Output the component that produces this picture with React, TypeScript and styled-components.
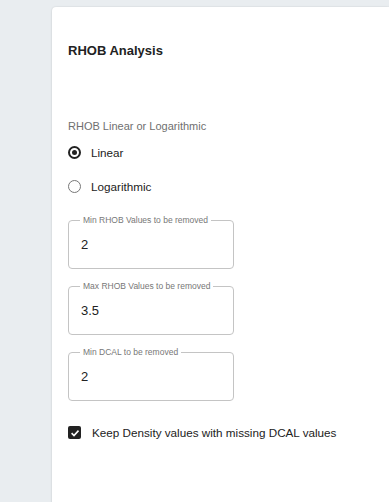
import React, { useState } from 'react'
import styled, { createGlobalStyle } from 'styled-components'

const GlobalStyle = createGlobalStyle`
  html, body {
    margin: 0;
    padding: 0;
    background: #e9edf0;
    font-family: "Liberation Sans", Arial, sans-serif;
  }
`

const Page = styled.div`
  padding: 7px 0 0 52px;
  height: 495px;
  overflow: hidden;
`

const Card = styled.div`
  background: #ffffff;
  border-radius: 4px 0 0 0;
  box-shadow: 0 0 2px rgba(0, 0, 0, 0.12), 0 1px 3px rgba(0, 0, 0, 0.06);
  min-height: 520px;
  padding: 36px 16px 0 16px;
  display: flex;
  flex-direction: column;
`

const Title = styled.h2`
  margin: 0;
  font-size: 13px;
  font-weight: bold;
  color: #222;
  line-height: 15px;
`

const GroupLabel = styled.div`
  margin-top: 61px;
  font-size: 11px;
  color: #6f6f6f;
  line-height: 14px;
`

const Radios = styled.div`
  margin-top: 2px;
  display: flex;
  flex-direction: column;
`

const RadioRow = styled.label`
  display: flex;
  align-items: center;
  gap: 10px;
  height: 34px;
  font-size: 11.7px;
  color: #222;
  cursor: pointer;
`

const RadioCircle = styled.span<{ $checked: boolean }>`
  box-sizing: border-box;
  width: 13px;
  height: 13px;
  border-radius: 50%;
  border: ${p => (p.$checked ? '2px solid #222' : '1px solid #777')};
  display: flex;
  align-items: center;
  justify-content: center;

  &::after {
    content: '';
    width: 5px;
    height: 5px;
    border-radius: 50%;
    background: ${p => (p.$checked ? '#222' : 'transparent')};
  }
`

const Fields = styled.div`
  margin-top: 13px;
  display: flex;
  flex-direction: column;
  gap: 13px;
`

const Field = styled.fieldset`
  box-sizing: border-box;
  margin: 0;
  width: 166px;
  height: 53px;
  padding: 0 12px;
  border: 1px solid #c4c4c4;
  border-radius: 4px;
`

const Legend = styled.legend`
  padding: 0 3px;
  margin-left: -1px;
  font-size: 8.5px;
  line-height: 8px;
  color: #777;
`

const Value = styled.input`
  display: block;
  box-sizing: border-box;
  border: none;
  outline: none;
  width: 100%;
  height: 16px;
  line-height: 16px;
  padding: 0;
  margin: 13px 0 0 0;
  font-family: "Liberation Sans", Arial, sans-serif;
  font-size: 13px;
  color: #222;
  background: transparent;
`

const CheckRow = styled.label`
  margin-top: 25px;
  display: flex;
  align-items: center;
  gap: 11px;
  font-size: 11.7px;
  color: #222;
  cursor: pointer;
`

const CheckBox = styled.span`
  width: 13px;
  height: 13px;
  border-radius: 2px;
  background: #222;
  display: flex;
  align-items: center;
  justify-content: center;
`

const fields = [
  { label: 'Min RHOB Values to be removed', value: '2' },
  { label: 'Max RHOB Values to be removed', value: '3.5' },
  { label: 'Min DCAL to be removed', value: '2' },
]

export default function App() {
  const [scale, setScale] = useState<'linear' | 'log'>('linear')

  return (
    <>
      <GlobalStyle />
      <Page>
        <Card>
          <Title>RHOB Analysis</Title>
          <GroupLabel>RHOB Linear or Logarithmic</GroupLabel>
          <Radios>
            <RadioRow onClick={() => setScale('linear')}>
              <RadioCircle $checked={scale === 'linear'} />
              Linear
            </RadioRow>
            <RadioRow onClick={() => setScale('log')}>
              <RadioCircle $checked={scale === 'log'} />
              Logarithmic
            </RadioRow>
          </Radios>
          <Fields>
            {fields.map(f => (
              <Field key={f.label}>
                <Legend>{f.label}</Legend>
                <Value defaultValue={f.value} />
              </Field>
            ))}
          </Fields>
          <CheckRow>
            <CheckBox>
              <svg width="10" height="10" viewBox="0 0 10 10">
                <path d="M1.6 5.2 L4 7.5 L8.5 2.6" fill="none" stroke="#fff" strokeWidth="1.6" />
              </svg>
            </CheckBox>
            Keep Density values with missing DCAL values
          </CheckRow>
        </Card>
      </Page>
    </>
  )
}
